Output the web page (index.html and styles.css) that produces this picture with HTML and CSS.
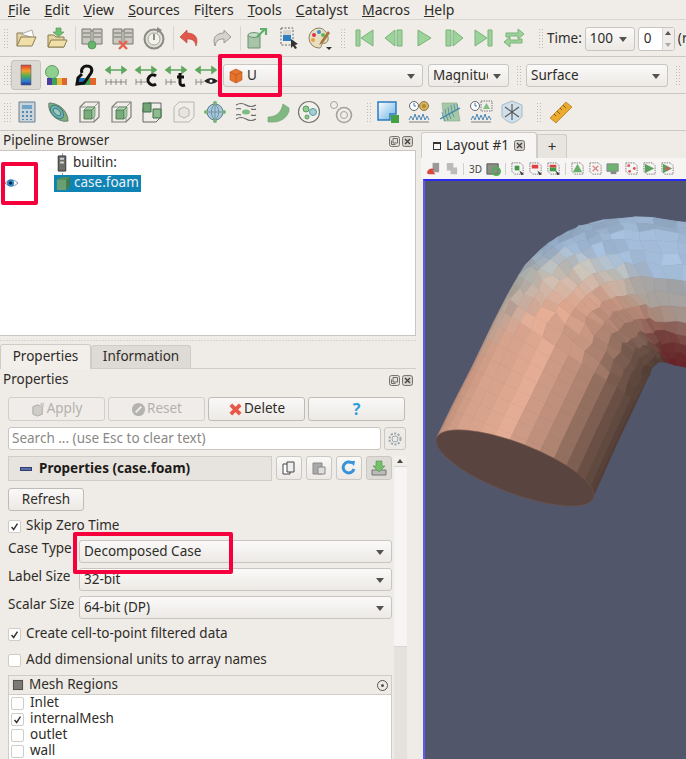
FILE: index.html
```html
<!DOCTYPE html>
<html lang="en">
<head>
  <meta charset="UTF-8" />
  <title>ParaView</title>
  <link rel="stylesheet" href="styles.css">
</head>
<body>
  <svg class="defs" width="0" height="0">
    <symbol id="wirecube" viewBox="0 0 24 24"><path d="M8 2h14v15l-5 5H3V7z" fill="none" stroke="#7c7c78" stroke-width="1.200"/><path d="M3 7h14v15M17 7l5-5" fill="none" stroke="#7c7c78" stroke-width=".8"/><path d="M7 10h8v9H7z" fill="#79ab7b" stroke="#55805a"/><path d="M7 10l3-3h8l-3 3zM15 10l3-3v9l-3 3z" fill="#a5cba7" stroke="#55805a" stroke-width=".6"/></symbol>
    <symbol id="server" viewBox="0 0 24 24"><path d="M2 3h9v15H2zM13 3h9v15h-9z" fill="#c9c9c2" stroke="#77776f"/><path d="M3 7h7M3 11h7M14 7h7M14 11h7M11 5h2" stroke="#77776f"/></symbol>
    <symbol id="chart" viewBox="0 0 24 24"><path d="M2 22h20" stroke="#666" stroke-width=".8"/><path d="M2 20l2-4 2 4 2-6 2 6 2-5 2 5 2-6 2 6 2-4 2 4" fill="none" stroke="#4d87b5"/></symbol>
    <symbol id="ruler" viewBox="0 0 16 16"><path d="M2 2h9l3 3v9H5l-3-3z" fill="none" stroke="#777" stroke-dasharray="1.500 1"/></symbol>
    <symbol id="check" viewBox="0 0 13 13"><path d="M3 7l2.500 3L10 3" fill="none" stroke="#333" stroke-width="1.700"/></symbol>
    <symbol id="float" viewBox="0 0 11 11"><rect x=".5" y=".5" width="10" height="10" rx="2" fill="#e3dfda" stroke="#77736e"/><path d="M4 2.500h4.500V7H4zM2.500 4.500V8.500H6.500" fill="none" stroke="#55524e" stroke-width=".8"/></symbol>
    <symbol id="close" viewBox="0 0 11 11"><rect x=".5" y=".5" width="10" height="10" rx="2" fill="#d5d1cc" stroke="#77736e"/><path d="M3 3l5 5M8 3L3 8" stroke="#44413d" stroke-width="1.300"/></symbol>
  </svg>

  <nav class="menubar">
    <span class="menu"><u>F</u>ile</span>
    <span class="menu"><u>E</u>dit</span>
    <span class="menu"><u>V</u>iew</span>
    <span class="menu"><u>S</u>ources</span>
    <span class="menu">Fi<u>l</u>ters</span>
    <span class="menu"><u>T</u>ools</span>
    <span class="menu"><u>C</u>atalyst</span>
    <span class="menu"><u>M</u>acros</span>
    <span class="menu"><u>H</u>elp</span>
  </nav>

  <!-- main toolbar -->
  <div class="toolbar">
    <span class="grip"></span>
    <span class="tool"><svg viewBox="0 0 24 24"><path d="M3 20V7h6l2 2h6v3" fill="#e3d4a4" stroke="#8c7c50"/><path d="M7 8l11-4 2 8z" fill="#fff" stroke="#aaa"/><path d="M3 20l4-9h15l-4 9z" fill="#f0dfa8" stroke="#8c7c50"/></svg></span>
    <span class="tool"><svg viewBox="0 0 24 24"><path d="M3 21V9h6l2 2h8v10z" fill="#e3d4a4" stroke="#8c7c50"/><path d="M3 21l3-7h16l-3 7z" fill="#f0dfa8" stroke="#8c7c50"/><path d="M11 2h5v4h3l-5.500 5L8 6h3z" fill="#6fbf73" stroke="#4a9050" stroke-width=".6"/></svg></span>
    <span class="sep"></span>
    <span class="tool"><svg viewBox="0 0 24 24"><use href="#server"/><circle cx="12" cy="19" r="4" fill="#66b56b" stroke="#3f8a47" stroke-width=".6"/></svg></span>
    <span class="tool"><svg viewBox="0 0 24 24"><use href="#server"/><path d="M8 15l8 8M16 15l-8 8" stroke="#e8604c" stroke-width="2.400"/></svg></span>
    <span class="tool"><svg viewBox="0 0 24 24"><circle cx="12" cy="13" r="9.500" fill="#e2e0d9" stroke="#8b8b83" stroke-width="2"/><circle cx="12" cy="13" r="6" fill="#f2f1ec" stroke="#a5a59d"/><path d="M12 8v6" stroke="#77776f" stroke-width="1.600"/><path d="M15 1l5 3-5 3z" fill="#8b8b83"/></svg></span>
    <span class="sep sep-wide"></span>
    <span class="tool"><svg viewBox="0 0 24 24"><path d="M9 4L2 11l7 6v-4c5 0 8 1 9 7 3-8-1-13-9-13z" fill="#e2574c" stroke="#b53a32" stroke-width=".6"/></svg></span>
    <span class="tool"><svg viewBox="0 0 24 24"><path d="M15 4l7 7-7 6v-4c-5 0-8 1-9 7-3-8 1-13 9-13z" fill="#d4d2cc" stroke="#9a9a92"/></svg></span>
    <span class="sep sep-wide"></span>
    <span class="tool"><svg viewBox="0 0 24 24"><path d="M3 9h12v13H3z" fill="#a8c4a8" stroke="#6f8f70"/><ellipse cx="9" cy="9" rx="6" ry="2.400" fill="#c7dcc7" stroke="#6f8f70"/><path d="M12 11l8-8M15 3h6v6" fill="none" stroke="#5fb06a" stroke-width="2.200"/></svg></span>
    <span class="tool"><svg viewBox="0 0 24 24"><path d="M5 2h12v17H5z" fill="none" stroke="#666" stroke-dasharray="2 1.500"/><path d="M7 4h8v5H7z" fill="#d6d6d0"/><path d="M7 9h8v6H7z" fill="#2e7fc1"/><path d="M15 13l7 5-3 1 2 3-2 1-2-3-2 2z" fill="#333"/></svg></span>
    <span class="tool"><svg viewBox="0 0 24 24"><path d="M12 2a10 10 0 1 0 0 20c3 0 2-3 3-4s5 0 6-4-3-12-9-12z" fill="#e8dfc2" stroke="#8b8060"/><circle cx="7" cy="9" r="2" fill="#d34"/><circle cx="12" cy="6" r="2" fill="#3b8fd0"/><circle cx="16" cy="9" r="2" fill="#5cb85c"/><circle cx="6" cy="14" r="2" fill="#e8a33c"/><path d="M21 5l-7 10-2 4 4-2 7-10z" fill="#a5753b"/></svg><i class="small-caret"></i></span>
    <span class="grip grip-1"></span>
    <span class="tool vcr"><svg viewBox="0 0 24 24"><path d="M4 4h4v16H4zM21 4v16L9 12z"/></svg></span>
    <span class="tool vcr"><svg viewBox="0 0 24 24"><path d="M15 4h5v16h-5zM13 4v16L3 12z"/></svg></span>
    <span class="tool vcr"><svg viewBox="0 0 24 24"><path d="M6 4l13 8-13 8z"/></svg></span>
    <span class="tool vcr"><svg viewBox="0 0 24 24"><path d="M4 4h5v16H4zM11 4v16l10-8z"/></svg></span>
    <span class="tool vcr"><svg viewBox="0 0 24 24"><path d="M3 4v16l12-8zM16 4h4v16h-4z"/></svg></span>
    <span class="tool vcr"><svg viewBox="0 0 24 24"><path d="M4 11V7h12V3l6 5-6 5v-3H7v1zM20 13v4H8v4l-6-5 6-5v3h9v-1z"/></svg></span>
    <span class="grip grip-2"></span>
    <span class="time-label">Time:</span>
    <span class="combo combo-time">100<i class="caret"></i></span>
    <span class="spin">0<span class="spin-arrows"><i class="up"></i><i class="down"></i></span></span>
    <span class="time-more">(r</span>
  </div>

  <!-- display toolbar -->
  <div class="toolbar">
    <span class="grip grip-a"></span>
    <span class="tool tool-on"><svg viewBox="0 0 24 24"><defs><linearGradient id="rainbow" x1="0" y1="0" x2="0" y2="1"><stop offset="0" stop-color="#e2382c"/><stop offset=".3" stop-color="#f0a030"/><stop offset=".55" stop-color="#4fb04f"/><stop offset=".8" stop-color="#2f7fd0"/><stop offset="1" stop-color="#23339a"/></linearGradient></defs><path d="M7 2h10v20H7z" fill="url(#rainbow)" stroke="#666" stroke-width=".6"/></svg></span>
    <span class="tool tool-30"><svg viewBox="0 0 24 24"><circle cx="8" cy="9" r="6.500" fill="#8fd08f" stroke="#5d9f5f"/><path d="M3 15h5v7H3z" fill="#4a3fa0"/><path d="M8 15h5v7H8z" fill="#3fa05a"/><path d="M13 15h5v7h-5z" fill="#e8b63c"/><path d="M18 15h5v7h-5z" fill="#e0662c"/></svg></span>
    <span class="tool tool-30"><svg viewBox="0 0 24 24"><path d="M5 15h5v7H5z" fill="#1d6fc0"/><path d="M10 15h6v7h-6z" fill="#3fa05a"/><path d="M16 15h6v7h-6z" fill="#e0662c"/><path d="M8 10a5 5 0 0 1 5-7c4 0 6 3 4 7l-7 10-7 1 1-6 4-4" fill="none" stroke="#111" stroke-width="3"/></svg></span>
    <span class="tool tool-30"><svg viewBox="0 0 24 24"><path d="M2 7h20M2 7l4-3v6zM22 7l-4-3v6z" fill="#7cc77c" stroke="#5da75d" stroke-width="1.600"/><path d="M2 19h20M2 16v6M7 16v6M12 16v6M17 16v6M22 16v6" stroke="#777" stroke-width=".8"/></svg></span>
    <span class="tool tool-30"><svg viewBox="0 0 24 24"><path d="M2 7h20M2 7l4-3v6zM22 7l-4-3v6z" fill="#7cc77c" stroke="#5da75d" stroke-width="1.600"/><path d="M2 19h12M2 16v6M7 16v6" stroke="#777" stroke-width=".8"/><path d="M22 13a5 5 0 1 0 0 8" fill="none" stroke="#111" stroke-width="3"/></svg></span>
    <span class="tool tool-30"><svg viewBox="0 0 24 24"><path d="M2 7h20M2 7l4-3v6zM22 7l-4-3v6z" fill="#7cc77c" stroke="#5da75d" stroke-width="1.600"/><path d="M2 19h10M2 16v6M7 16v6" stroke="#777" stroke-width=".8"/><path d="M16 10v10c0 2 2 3 5 2M13 14h7" fill="none" stroke="#111" stroke-width="3"/></svg></span>
    <span class="tool tool-30"><svg viewBox="0 0 24 24"><path d="M2 7h20M2 7l4-3v6zM22 7l-4-3v6z" fill="#7cc77c" stroke="#5da75d" stroke-width="1.600"/><path d="M2 19h8M2 16v6M7 16v6" stroke="#777" stroke-width=".8"/><path d="M10 18q7-6 14 0-7 6-14 0z" fill="#222"/><circle cx="17" cy="18" r="1.500" fill="#fff"/></svg></span>
    <span class="combo combo-array"><svg class="array-icon" viewBox="0 0 16 16"><path d="M8 1l6 3v8l-6 3-6-3V4z" fill="#e8742c" stroke="#b5531c" stroke-width=".6"/><path d="M2 4l6 3 6-3M8 7v8" fill="none" stroke="#b5531c" stroke-width=".7"/></svg>U<i class="caret"></i></span>
    <span class="combo combo-comp"><span class="clip">Magnitude</span><i class="caret"></i></span>
    <span class="grip grip-3"></span>
    <span class="combo combo-repr">Surface<i class="caret"></i></span>
    <span class="grip grip-4"></span>
  </div>

  <!-- filter toolbar -->
  <div class="toolbar">
    <span class="grip grip-a"></span>
    <span class="tool tool-f"><svg viewBox="0 0 24 24"><path d="M4 2h16v20H4z" fill="#c9d5dc" stroke="#6f7f88"/><path d="M7 5h10v4H7z" fill="#6fa3c7"/><path d="M7 11h2v2H7zM11 11h2v2h-2zM15 11h2v2h-2zM7 15h2v2H7zM11 15h2v2h-2zM15 15h2v2h-2zM7 19h2v1H7zM11 19h2v1h-2zM15 19h2v1h-2z" fill="#5d8aa8"/></svg></span>
    <span class="tool tool-f"><svg viewBox="0 0 24 24"><path d="M3 3c10 0 19 8 19 18-10 2-21-8-19-18z" fill="#7fae80" stroke="#66806a"/><ellipse cx="11" cy="12" rx="5" ry="8" transform="rotate(-45 11 12)" fill="#6fb0b8" stroke="#3f7f78"/><ellipse cx="11" cy="12" rx="2.500" ry="4.500" transform="rotate(-45 11 12)" fill="#9cc9c0" stroke="#3f7f78"/></svg></span>
    <span class="tool tool-f"><svg viewBox="0 0 24 24"><use href="#wirecube"/></svg></span>
    <span class="tool tool-f"><svg viewBox="0 0 24 24"><use href="#wirecube"/></svg></span>
    <span class="tool tool-f"><svg viewBox="0 0 24 24"><path d="M3 8l5-5h13v14l-5 5H3z" fill="none" stroke="#666"/><path d="M3 3h8v9H3z" fill="#74a476" stroke="#3f6a45"/><path d="M13 9h8v9h-8z" fill="#8cbc8e" stroke="#3f6a45"/></svg></span>
    <span class="tool tool-f tool-dim"><svg viewBox="0 0 24 24"><path d="M7 2h15v15l-5 5H2V7z" fill="none" stroke="#a5a5a0"/><path d="M12 7l5 2.500v6L12 18l-5-2.500v-6z" fill="#e4e3dd" stroke="#a5a5a0"/></svg></span>
    <span class="tool tool-f"><svg viewBox="0 0 24 24"><circle cx="12" cy="12" r="8" fill="#a7c8dc" stroke="#5f7f88"/><path d="M4 12h16M12 4v16M12 4c-5 5-5 11 0 16M12 4c5 5 5 11 0 16" fill="none" stroke="#5f7f88" stroke-width=".7"/><circle cx="12" cy="3" r="2" fill="#78b478"/><circle cx="12" cy="21" r="2" fill="#78b478"/><circle cx="3" cy="12" r="2" fill="#78b478"/><circle cx="21" cy="12" r="2" fill="#78b478"/></svg></span>
    <span class="tool tool-f"><svg viewBox="0 0 24 24"><path d="M2 5q5-3 10 0t10 0M2 19q5-3 10 0t10 0M2 9q3-1 5 0M17 9q3 1 5 0M2 15q3-1 5 0M17 15q3 1 5 0" fill="none" stroke="#666" stroke-width="1.200"/><ellipse cx="12" cy="12" rx="4" ry="2.500" fill="#7dbb80"/></svg></span>
    <span class="tool tool-f"><svg viewBox="0 0 24 24"><path d="M2 22v-5c9 0 13-5 15-13l6 4v3c-2 7-9 11-15 11z" fill="#7fb881" stroke="#6d9d70" stroke-width=".6"/></svg></span>
    <span class="tool tool-f"><svg viewBox="0 0 24 24"><circle cx="12" cy="12" r="10.500" fill="#f3f1ec" stroke="#77776f" stroke-width="1.200"/><circle cx="9" cy="9" r="3" fill="#8ecb90" stroke="#5a9a5c"/><circle cx="16" cy="12" r="3.500" fill="#a3d0d6" stroke="#5a9aa2"/><circle cx="10" cy="17" r="2" fill="#8ecb90" stroke="#5a9a5c"/></svg></span>
    <span class="tool tool-f tool-dim"><svg viewBox="0 0 24 24"><circle cx="5" cy="5" r="3.500" fill="none" stroke="#8a8a82"/><circle cx="15" cy="15" r="7.500" fill="none" stroke="#8a8a82" stroke-width="1.600"/><circle cx="15" cy="15" r="3.500" fill="none" stroke="#8a8a82"/></svg></span>
    <span class="grip grip-5"></span>
    <span class="tool"><svg viewBox="0 0 24 24"><defs><linearGradient id="sel" x1="0" y1="0" x2="1" y2="1"><stop offset="0" stop-color="#ffffff"/><stop offset="1" stop-color="#6ab1e6"/></linearGradient></defs><path d="M2 2h18v12h-6v6H2z" fill="url(#sel)" stroke="#2c7abf" stroke-width="1.500"/><path d="M15 15h8v8h-8z" fill="#43a047"/></svg></span>
    <span class="tool"><svg viewBox="0 0 24 24"><circle cx="7" cy="6" r="4.500" fill="#fff" stroke="#666"/><path d="M7 3v3h2" fill="none" stroke="#3a7ab5"/><circle cx="17" cy="6" r="4.500" fill="#d9b25c" stroke="#8a7a4a"/><circle cx="17" cy="6" r="2" fill="#b08a30"/><use href="#chart"/></svg></span>
    <span class="tool"><svg viewBox="0 0 24 24"><path d="M4 3h15l3 18H6z" fill="#a5c9a7" stroke="#86a888" stroke-width=".6"/><path d="M2 19L22 8" stroke="#3d7fa8" stroke-width="1.400"/><path d="M5 17l-1-5M8 15l-1-6M11 14l-1-7M14 12l-1-7M17 10l-1-6M20 9l-1-5M5 17l2 4M8 15l2 5M11 14l2 5M14 12l2 5" stroke="#3d7fa8" stroke-width=".7"/></svg></span>
    <span class="tool"><svg viewBox="0 0 24 24"><circle cx="6" cy="6" r="4.500" fill="#fff" stroke="#666"/><path d="M6 3v3h2" fill="none" stroke="#3a7ab5"/><path d="M12 1h11v10H12z" fill="none" stroke="#777" stroke-dasharray="1.500 1"/><path d="M17.500 3l3.500 6h-7z" fill="#7dc07f"/><use href="#chart"/></svg></span>
    <span class="tool"><svg viewBox="0 0 24 24"><path d="M12 1l10 4v11c-1 3-6 6-10 7-4-1-9-4-10-7V5z" fill="#cfe0ea" stroke="#a5b9c5"/><path d="M12 4v16M5 7l14 10M19 7L5 17" stroke="#555" stroke-width="1.100"/></svg></span>
    <span class="grip grip-6"></span>
    <span class="tool"><svg viewBox="0 0 24 24"><path d="M1 18L17 2l6 5L7 23z" fill="#eba92f" stroke="#a87a1e" stroke-width=".7"/><path d="M5 14l2 2M8 11l3 3M11 8l2 2M14 5l3 3" stroke="#8a6416"/></svg></span>
  </div>

  <div class="workspace">
    <div class="left-pane">
      <div class="dock-title">Pipeline Browser<span class="dock-btns"><svg><use href="#float"/></svg><svg><use href="#close"/></svg></span></div>
      <div class="tree">
        <div class="tree-row">
          <svg class="tree-icon" viewBox="0 0 16 18"><path d="M4 1h8v16H4z" fill="#6d6d6a" stroke="#333"/><path d="M6 3h4v2H6zM6 7h4v2H6z" fill="#d5d5d0"/></svg>
          <span>builtin:</span>
        </div>
        <div class="tree-row">
          <svg class="eye" viewBox="0 0 16 12"><path d="M1 6q7-7 14 0-7 7-14 0z" fill="#fff" stroke="#88a"/><circle cx="7" cy="6" r="3.800" fill="#2a86c0"/><circle cx="7" cy="6" r="1.700" fill="#0b2233"/></svg>
          <span class="tree-selected"><svg class="tree-cube" viewBox="0 0 16 16"><path d="M1 4l5-3h9v9l-4 5H1z" fill="#4f8c5f"/><path d="M1 4h10v11H1z" fill="#6a9f72"/><path d="M11 4l4-3v9l-4 5z" fill="#3f7a50"/></svg>case.foam</span>
        </div>
      </div>
      <div class="splitter"></div>

      <div class="tabs">
        <span class="tab tab-on">Properties</span>
        <span class="tab tab-off">Information</span>
      </div>
      <div class="dock-title dock-props">Properties<span class="dock-btns"><svg><use href="#float"/></svg><svg><use href="#close"/></svg></span></div>

      <div class="actions">
        <button class="btn btn-off"><svg class="btn-icon" viewBox="0 0 16 16"><path d="M2 5l5-2 5 2v8l-5 2-5-2z" fill="#cfcdc8" stroke="#aaa"/><path d="M10 1h4v4h-4z" fill="#cfcdc8"/></svg>Apply</button>
        <button class="btn btn-off"><svg class="btn-icon" viewBox="0 0 16 16"><circle cx="8" cy="8" r="7" fill="#b5b3ae"/><path d="M5 11l6-6" stroke="#eee" stroke-width="2"/></svg>Reset</button>
        <button class="btn"><svg class="btn-icon" viewBox="0 0 16 16"><path d="M3 3l10 10M13 3L3 13" stroke="#e8584a" stroke-width="4"/></svg>Delete</button>
        <button class="btn btn-help">?</button>
      </div>

      <div class="search-row">
        <span class="search">Search ... (use Esc to clear text)</span>
        <span class="gear"><svg viewBox="0 0 16 16"><circle cx="8" cy="8" r="5.500" fill="none" stroke="#9aa5ad" stroke-width="2" stroke-dasharray="2 1.500"/><circle cx="8" cy="8" r="3" fill="none" stroke="#9aa5ad"/></svg></span>
      </div>

      <div class="props-scroll">
        <div class="props-body">
          <div class="section-row">
            <div class="section-head"><i class="minus"></i>Properties (case.foam)</div>
            <span class="mini"><svg viewBox="0 0 16 16"><path d="M2 4h7v10H2z" fill="#fff" stroke="#444"/><path d="M6 2h7v10H6z" fill="#eee" stroke="#444"/></svg></span>
            <span class="mini"><svg viewBox="0 0 16 16"><path d="M2 3h9v11H2z" fill="#aaa" stroke="#888"/><path d="M7 7h7v7H7z" fill="#ddd" stroke="#888"/></svg></span>
            <span class="mini"><svg viewBox="0 0 16 16"><path d="M13 9a5.500 5.500 0 1 1-2-6" fill="none" stroke="#3a93d8" stroke-width="3"/><path d="M8 1l6 0-1 5z" fill="#3a93d8"/></svg></span>
            <span class="mini mini-last"><svg viewBox="0 0 16 16"><path d="M1 10h14v5H1z" fill="#bbb" stroke="#777"/><path d="M5 1h6v5h3l-6 6-6-6h3z" fill="#76bf6e" stroke="#4f9448" stroke-width=".6"/></svg></span>
          </div>
          <button class="btn btn-refresh">Refresh</button>
          <label class="check-row check-skip"><span class="box"><svg><use href="#check"/></svg></span>Skip Zero Time</label>
          <div class="field"><span class="field-label">Case Type</span><span class="combo combo-field">Decomposed Case<i class="caret"></i></span></div>
          <div class="field"><span class="field-label">Label Size</span><span class="combo combo-field">32-bit<i class="caret"></i></span></div>
          <div class="field"><span class="field-label">Scalar Size</span><span class="combo combo-field">64-bit (DP)<i class="caret"></i></span></div>
          <label class="check-row check-cell"><span class="box"><svg><use href="#check"/></svg></span>Create cell-to-point filtered data</label>
          <label class="check-row check-units"><span class="box"></span>Add dimensional units to array names</label>
          <div class="regions">
            <div class="regions-head"><span class="tri-box"></span>Mesh Regions<i class="regions-menu"></i></div>
            <div class="regions-list">
              <label class="region"><span class="box"></span>Inlet</label>
              <label class="region"><span class="box"><svg><use href="#check"/></svg></span>internalMesh</label>
              <label class="region"><span class="box"></span>outlet</label>
              <label class="region"><span class="box"></span>wall</label>
            </div>
          </div>
        </div>
        <div class="scrollbar"><span class="scroll-up"></span><span class="scroll-thumb"></span></div>
      </div>
    </div>

    <div class="right-pane">
      <div class="view-tabs">
        <span class="view-tab"><i class="win-icon"></i>Layout #1<svg class="tab-close"><use href="#close"/></svg></span>
        <span class="view-add">+</span>
      </div>
      <div class="view-tools">
        <svg viewBox="0 0 16 16"><path d="M7 2h7v10H7z" fill="#999"/><path d="M1 13a5 5 0 0 1 8-4l-2 1 3 4H3z" fill="#d8483c"/></svg>
        <svg viewBox="0 0 16 16"><path d="M3 2h7v8H3zM7 7h7v7H7z" fill="#bbb"/></svg>
        <i class="view-sep"></i>
        <span class="view-3d">3D</span>
        <svg viewBox="0 0 16 16"><path d="M1 3h12v11H1z" fill="#8a9088" stroke="#555"/><circle cx="11" cy="11" r="4" fill="none" stroke="#4caf50" stroke-width="2"/></svg>
        <i class="view-sep"></i>
        <svg viewBox="0 0 16 16"><use href="#ruler"/><path d="M5 5h5v5H5z" fill="#3f9a4a"/><path d="M10 10l5 4-3 1z" fill="#333"/></svg>
        <svg viewBox="0 0 16 16"><use href="#ruler"/><path d="M4 4h7v4H4z" fill="#dd4040"/><path d="M10 10l5 4-3 1z" fill="#333"/></svg>
        <svg viewBox="0 0 16 16"><use href="#ruler"/><path d="M4 4h7v3H4z" fill="#dd4040"/><path d="M4 7h7v4H4z" fill="#3f9a4a"/><path d="M10 10l5 4-3 1z" fill="#333"/></svg>
        <i class="view-sep"></i>
        <svg viewBox="0 0 16 16"><use href="#ruler"/><path d="M8 3l5 9H3z" fill="#67b06c"/></svg>
        <svg viewBox="0 0 16 16"><use href="#ruler"/><path d="M5 5l6 6M11 5l-6 6" stroke="#d88" stroke-width="1.500"/></svg>
        <svg viewBox="0 0 16 16"><path d="M1 3h12v8H1z" fill="#6cb271" stroke="#888"/><path d="M5 11h6v3H5z" fill="#888"/></svg>
        <svg viewBox="0 0 16 16"><use href="#ruler"/><circle cx="5" cy="5" r="1.500" fill="#d55"/><circle cx="11" cy="8" r="1.500" fill="#d55"/><circle cx="6" cy="11" r="1.500" fill="#d55"/></svg>
        <svg viewBox="0 0 16 16"><use href="#ruler"/><path d="M3 3l10 5-10 5z" fill="#5aa05f"/></svg>
        <svg viewBox="0 0 16 16"><use href="#ruler"/><path d="M3 3l10 5-10 5z" fill="#5aa05f"/><circle cx="8" cy="8" r="2" fill="#d55"/></svg>
      </div>
      <div class="viewport">
        <svg id="mesh" class="mesh" viewBox="425 181 261 578" xmlns="http://www.w3.org/2000/svg"></svg>
      </div>
    </div>
  </div>

  <div class="mark mark-u"></div>
  <div class="mark mark-eye"></div>
  <div class="mark mark-case"></div>

  <script src="pipe.js"></script>
</body>
</html>
```

FILE: styles.css
```css
* { box-sizing: border-box; }

html, body {
  height: 759px;
  overflow: hidden;
}

body {
  margin: 0;
  position: relative;
  background: #efebe7;
  color: #2e2c28;
  font-family: "Noto Sans", sans-serif;
  font-size: 13.5px;
  line-height: 1;
}

.defs { position: absolute; }

/* menu */
.menubar {
  display: flex;
  height: 20px;
  padding-left: 8px;
  align-items: center;
  background: #f0ece8;
  border-bottom: 1px solid #d9d5d0;
  font-size: 14px;
  white-space: nowrap;
}
.menu { margin-right: 14px; }

/* toolbars */
.toolbar {
  display: flex;
  align-items: center;
  height: 37px;
  padding-left: 3px;
  overflow: hidden;
  background: #f0ece8;
  border-bottom: 1px solid #cbc7c2;
  white-space: nowrap;
}

.grip {
  flex: none;
  width: 7px;
  height: 20px;
  background-image: radial-gradient(#bdb9b4 1px, transparent 1px);
  background-size: 3px 3px;
}
.grip-a { width: 8px; }
.grip-1 { width: 5px; margin: 0 4px 0 6px; }
.grip-2 { width: 5px; margin: 0 4px 0 9px; }
.grip-3 { width: 5px; margin: 0 5px 0 7px; }
.grip-4 { width: 5px; margin-left: 7px; }
.grip-5 { width: 5px; margin: 0 1px 0 10px; }
.grip-6 { width: 5px; margin: 0 4px 0 9px; }

.tool {
  position: relative;
  flex: none;
  display: flex;
  align-items: center;
  justify-content: center;
  width: 31px;
  height: 30px;
}
.tool svg { width: 24px; height: 24px; }
.tool-30 { width: 30px; }
.tool-f { width: 31.4px; }
.tool-dim { opacity: .75; }
.tool-on {
  width: 30px;
  background: #dcd8d3;
  border: 1px solid #c6c2bd;
  border-radius: 3px;
}
.vcr { width: 30px; }
.vcr svg { fill: #9bd39b; stroke: #7ab37a; }

.sep {
  flex: none;
  width: 4px;
  height: 24px;
  border-right: 1px solid #d9d5d0;
}
.sep-wide { width: 5px; }

.small-caret {
  position: absolute;
  right: 2px;
  bottom: 3px;
  border: 3px solid transparent;
  border-top-color: #333;
  border-bottom: 0;
}

.combo {
  position: relative;
  flex: none;
  display: flex;
  align-items: center;
  height: 23px;
  padding-left: 4px;
  background: linear-gradient(#fbfaf9, #ece9e5);
  border: 1px solid #c9c5c0;
  border-radius: 3px;
  color: #2e2c28;
}
.toolbar .combo { margin-top: 1px; padding-top: 1px; }
.caret {
  position: absolute;
  right: 7px;
  top: 9px;
  border: 4px solid transparent;
  border-top: 5px solid #55524e;
  border-bottom: 0;
}
.combo-time { width: 50px; height: 24px; }
.toolbar .combo-array { width: 200px; margin-left: 2px; }
.toolbar .combo-comp { width: 81px; margin-left: 5px; }
.combo-repr { width: 142px; }
.array-icon { width: 16px; height: 16px; margin-right: 3px; }
.clip { display: block; width: 55px; overflow: hidden; }

.time-label { margin: 2px 3px 0 0; }
.spin {
  position: relative;
  flex: none;
  display: flex;
  align-items: center;
  width: 37px;
  height: 24px;
  margin: 1px 0 0 3px;
  padding: 1px 0 0 5px;
  background: #fff;
  border: 1px solid #c9c5c0;
  border-radius: 3px;
}
.spin-arrows {
  position: absolute;
  right: 0;
  top: 0;
  bottom: 0;
  width: 12px;
  background: #efecea;
  border-left: 1px solid #dcd8d3;
}
.up, .down {
  position: absolute;
  left: 2px;
  border: 3px solid transparent;
}
.up { top: 3px; border-bottom: 4px solid #555; border-top: 0; }
.down { bottom: 3px; border-top: 4px solid #aaa; border-bottom: 0; }
.time-more { margin: 2px 0 0 3px; }

/* panes */
.workspace {
  display: flex;
  height: 628px;
}
.left-pane {
  flex: none;
  width: 416px;
}
.right-pane {
  flex: none;
  width: 270px;
  padding-left: 5px;
  display: flex;
  flex-direction: column;
}

.dock-title {
  display: flex;
  align-items: center;
  justify-content: space-between;
  height: 19px;
  padding: 1px 3px 0;
}
.dock-btns { display: flex; gap: 2px; }
.dock-btns svg { width: 11px; height: 11px; }

.tree {
  height: 186px;
  padding-top: 2px;
  background: #fff;
  border: 1px solid #c9c5c0;
  border-left: 0;
}
.tree-row {
  position: relative;
  display: flex;
  align-items: center;
  height: 20px;
  padding-left: 54px;
}
.tree-row::before {
  content: "";
  position: absolute;
  left: 62px;
  top: 0;
  width: 1px;
  height: 4px;
  background: #a5a29e;
}
.tree-icon { position: relative; width: 16px; height: 17px; margin: 0 3px 0 0; }
.eye {
  position: absolute;
  left: 4px;
  top: 4px;
  width: 15px;
  height: 12px;
}
.tree-selected {
  position: relative;
  display: flex;
  align-items: center;
  width: 87px;
  height: 17px;
  background: #0f83b4;
  color: #e8f2f6;
}
.tree-cube { width: 15px; height: 15px; margin: 0 3px 0 2px; }

.splitter {
  height: 9px;
  background-image: radial-gradient(#c2beb9 1px, transparent 1px);
  background-size: 3px 3px;
  background-position: center;
  background-repeat: repeat-x;
}

.tabs {
  display: flex;
  align-items: flex-end;
  height: 24px;
  border-bottom: 1px solid #d0ccc7;
}
.tab {
  display: flex;
  align-items: center;
  justify-content: center;
  border: 1px solid #cfcbc6;
  border-bottom: 0;
  border-radius: 3px 3px 0 0;
}
.tab-on { width: 91px; height: 25px; background: #f2efeb; margin-bottom: -1px; }
.tab-off { width: 100px; height: 23px; background: #dedad5; }

.dock-props { height: 22px; padding-top: 0; }

.actions {
  display: flex;
  gap: 3px;
  padding: 6px 0 0 8px;
}
.btn {
  display: flex;
  align-items: center;
  justify-content: center;
  width: 97px;
  height: 24px;
  padding: 0;
  font: inherit;
  color: #2e2c28;
  background: linear-gradient(#faf9f8, #ece9e5);
  border: 1px solid #bfbbb6;
  border-radius: 3px;
}
.btn-off { color: #b5b1ac; border-color: #d2cec9; background: #efecea; }
.btn-help { color: #2f9ddb; font-weight: bold; font-size: 16px; }
.btn-icon { width: 15px; height: 15px; margin-right: 1px; }

.search-row {
  display: flex;
  gap: 3px;
  padding: 6px 0 0 8px;
}
.search {
  display: flex;
  align-items: center;
  width: 373px;
  height: 23px;
  padding-left: 3px;
  background: #fff;
  border: 1px solid #c9c5c0;
  border-radius: 3px;
  color: #8a8885;
}
.gear {
  display: flex;
  align-items: center;
  justify-content: center;
  width: 22px;
  height: 23px;
  background: #eeebe7;
  border: 1px solid #cbc7c2;
  border-radius: 3px;
}
.gear svg { width: 16px; height: 16px; }

.props-scroll {
  display: flex;
  padding: 6px 0 0 8px;
}
.props-body { width: 384px; }
.scrollbar {
  width: 13px;
  margin-left: 2px;
  height: 310px;
  background: #e5e1dc;
}
.scroll-up {
  display: block;
  height: 10px;
  background: #f2efeb;
  position: relative;
}
.scroll-up::after {
  content: "";
  position: absolute;
  left: 3px;
  top: 3px;
  border: 3.5px solid transparent;
  border-bottom: 4px solid #444;
  border-top: 0;
}
.scroll-thumb {
  display: block;
  height: 181px;
  background: #f7f5f3;
  border-top: 1px solid #d9d5d0;
  border-bottom: 1px solid #d9d5d0;
}

.section-row {
  display: flex;
  align-items: flex-start;
  height: 32px;
}
.section-head {
  display: flex;
  align-items: center;
  width: 264px;
  height: 25px;
  padding-left: 11px;
  background: #e7e3de;
  border: 1px solid #d0ccc7;
  font-weight: bold;
  color: #1d1b18;
}
.minus {
  width: 12px;
  height: 4px;
  margin-right: 7px;
  background: #5b6ea8;
  border: 1px solid #2f3d70;
}
.mini {
  display: flex;
  align-items: center;
  justify-content: center;
  width: 26px;
  height: 24px;
  margin-left: 4px;
  background: linear-gradient(#faf9f8, #ece9e5);
  border: 1px solid #cbc7c2;
  border-radius: 3px;
}
.mini svg { width: 16px; height: 16px; }
.mini-last { background: #dedad5; }

.btn-refresh { width: 76px; height: 23px; }

.check-row {
  display: flex;
  align-items: center;
  height: 16px;
}
.check-skip { margin-top: 7px; }
.check-cell { margin-top: 2px; }
.check-units { margin-top: 10px; }

.box {
  display: block;
  flex: none;
  width: 13px;
  height: 13px;
  margin-right: 5px;
  background: #fff;
  border: 1px solid #cfcbc6;
  border-radius: 2px;
}
.box svg { display: block; width: 11px; height: 11px; }

.field {
  display: flex;
  height: 28px;
}
.check-skip + .field { margin-top: 6px; }
.field-label { width: 71px; padding-top: 2px; }
.combo-field { width: 313px; height: 23px; }

.regions {
  height: 90px;
  margin-top: 7px;
  border: 1px solid #cfcbc6;
  border-bottom: 0;
  background: #fff;
}
.regions-head {
  position: relative;
  display: flex;
  align-items: center;
  height: 19px;
  padding-left: 4px;
  background: #eeebe7;
  border-bottom: 1px solid #cfcbc6;
}
.tri-box {
  width: 10px;
  height: 10px;
  margin-right: 6px;
  background: #7d7a76;
  border: 1px solid #55524e;
  box-shadow: 0 0 0 1px #e5e1dc;
}
.regions-menu {
  position: absolute;
  right: 3px;
  top: 4px;
  width: 11px;
  height: 11px;
  border: 1px solid #55524e;
  border-radius: 50%;
}
.regions-menu::after {
  content: "";
  position: absolute;
  left: 3px;
  top: 3px;
  width: 3px;
  height: 3px;
  background: #55524e;
  border-radius: 50%;
}
.region {
  display: flex;
  align-items: center;
  height: 16px;
  padding-left: 2px;
}
.region .box { margin-right: 6px; }

/* view side */
.view-tabs {
  display: flex;
  align-items: flex-end;
  height: 27px;
  padding-top: 1px;
}
.view-tab {
  display: flex;
  align-items: center;
  width: 116px;
  height: 26px;
  padding-left: 11px;
  background: #f7f5f3;
  border: 1px solid #cfcbc6;
  border-bottom: 0;
  border-radius: 3px 3px 0 0;
}
.win-icon {
  width: 8px;
  height: 8px;
  margin-right: 5px;
  border: 1px solid #333;
  border-top-width: 2px;
}
.tab-close {
  flex: none;
  width: 11px;
  height: 11px;
  margin-left: 5px;
}
.view-add {
  display: flex;
  align-items: center;
  justify-content: center;
  width: 30px;
  height: 24px;
  background: #e8e4df;
  border: 1px solid #cfcbc6;
  border-bottom: 0;
  border-radius: 0 3px 0 0;
  font-size: 15px;
}
.view-tools {
  display: flex;
  align-items: center;
  gap: 3px;
  height: 21px;
  padding-left: 5px;
  background: #f7f5f3;
  overflow: hidden;
}
.view-tools svg { flex: none; width: 15px; height: 15px; }
.view-3d { font-size: 10px; color: #444; padding: 0 1px; }
.view-sep { flex: none; width: 1px; height: 12px; margin: 0 1px; background: #d2cec9; }

.viewport {
  flex: 1;
  margin-left: 2px;
  background: #52566a;
  border: 2px solid #2c2cf0;
  border-left-color: #5a5af5;
  border-right: 0;
  border-bottom: 0;
  overflow: hidden;
  min-height: 0;
}
.mesh { display: block; width: 261px; height: 578px; }

/* red highlights drawn over the shot */
.mark {
  position: absolute;
  border: 4px solid #f5003c;
  border-radius: 2px;
}
.mark-u { left: 218px; top: 54px; width: 64px; height: 43px; }
.mark-eye { left: 1px; top: 162px; width: 37px; height: 43px; }
.mark-case { left: 73px; top: 532px; width: 160px; height: 42px; }
```

FILE: pipe.js
```js
// draws the bent pipe as flat shaded facets
var outer = [[437,437],[455,400],[473,365],[492,325],[510,290],[525,265],[545,245],[570,230],[600,220],[640,217],[700,224]];
var inner = [[593,497],[607,466],[620,437],[632,412],[643,388],[652,368],[658,362],[664,362],[672,364],[680,366],[700,370]];

var pink = [227,171,147];
var grey = [196,192,184];
var blue = [165,190,219];
var dark = [107,32,38];
var ash = [160,155,152];

var STEPS = 26;
var STRIPS = 16;

function noise(a, b) {
  var s = Math.sin(a * 127.1 + b * 311.7) * 43758.5453;
  return s - Math.floor(s);
}

function clamp(k) {
  return Math.max(0, Math.min(1, k));
}

function mix(a, b, k) {
  k = clamp(k);
  return [a[0] + (b[0] - a[0]) * k, a[1] + (b[1] - a[1]) * k, a[2] + (b[2] - a[2]) * k];
}

function along(line, v) {
  var p = v * (line.length - 1);
  var i = Math.min(Math.floor(p), line.length - 2);
  var k = p - i;
  return [line[i][0] + (line[i + 1][0] - line[i][0]) * k, line[i][1] + (line[i + 1][1] - line[i][1]) * k];
}

function vertex(i, j) {
  var v = i / STEPS;
  var t = (1 - Math.cos(Math.PI * j / STRIPS)) / 2;
  var a = along(outer, v);
  var b = along(inner, v);
  var x = a[0] + (b[0] - a[0]) * t;
  var y = a[1] + (b[1] - a[1]) * t;
  if (j > 0 && j < STRIPS && i > 0 && v > 0.35) {
    x += (noise(i, j) - 0.5) * 5;
    y += (noise(j, i) - 0.5) * 5;
  }
  return [x, y];
}

function shade(t) {
  var stops = [[0, 0.82], [0.12, 0.97], [0.3, 1], [0.5, 0.9], [0.7, 0.72], [0.85, 0.5], [1, 0.36]];
  for (var i = 1; i < stops.length; i++) {
    if (t <= stops[i][0]) {
      var k = (t - stops[i - 1][0]) / (stops[i][0] - stops[i - 1][0]);
      return stops[i - 1][1] + (stops[i][1] - stops[i - 1][1]) * k;
    }
  }
  return 0.36;
}

function facetColor(i, j) {
  var v = (i + 0.5) / STEPS;
  var t = (1 - Math.cos(Math.PI * (j + 0.5) / STRIPS)) / 2;
  var h = v - 0.9 * t;
  var c = h < 0.42 ? mix(pink, grey, (h - 0.18) / 0.24) : mix(grey, blue, (h - 0.42) / 0.16);
  var bright = shade(t);
  // blue top keeps more light than the lower shaded side
  bright = bright + (1 - bright) * clamp(h) * 0.5;
  // long lower strips differ side to side, the bend is patchy
  var jitter = v > 0.35 ? 1 + (noise(i + 3, j + 7) - 0.5) * 0.1 : 1 + (noise(7, j) - 0.5) * 0.07;
  c = [c[0] * bright * jitter, c[1] * bright * jitter, c[2] * bright * jitter];
  c = mix(c, ash, clamp((v - 0.78) / 0.06) * (t > 0.45 && t < 0.62 ? 0.65 : 0));
  c = mix(c, dark, clamp((t - 0.62) / 0.36) * clamp((v - 0.68) / 0.1) * (0.75 + noise(i, j + 2) * 0.25));
  return "rgb(" + Math.round(c[0]) + "," + Math.round(c[1]) + "," + Math.round(c[2]) + ")";
}

var svg = document.getElementById("mesh");
var ns = "http://www.w3.org/2000/svg";

for (var i = 0; i < STEPS; i++) {
  for (var j = 0; j < STRIPS; j++) {
    var pts = [vertex(i, j), vertex(i, j + 1), vertex(i + 1, j + 1), vertex(i + 1, j)];
    var poly = document.createElementNS(ns, "polygon");
    var col = facetColor(i, j);
    poly.setAttribute("points", pts.map(function (p) { return p[0].toFixed(1) + "," + p[1].toFixed(1); }).join(" "));
    poly.setAttribute("fill", col);
    poly.setAttribute("stroke", col);
    poly.setAttribute("stroke-width", "0.6");
    svg.appendChild(poly);
  }
}

var cap = document.createElementNS(ns, "ellipse");
cap.setAttribute("cx", "515");
cap.setAttribute("cy", "468");
cap.setAttribute("rx", "84");
cap.setAttribute("ry", "25");
cap.setAttribute("transform", "rotate(21 515 468)");
cap.setAttribute("fill", "#5a443f");
cap.setAttribute("stroke", "#6e5249");
cap.setAttribute("stroke-width", "0.6");
svg.appendChild(cap);
```
